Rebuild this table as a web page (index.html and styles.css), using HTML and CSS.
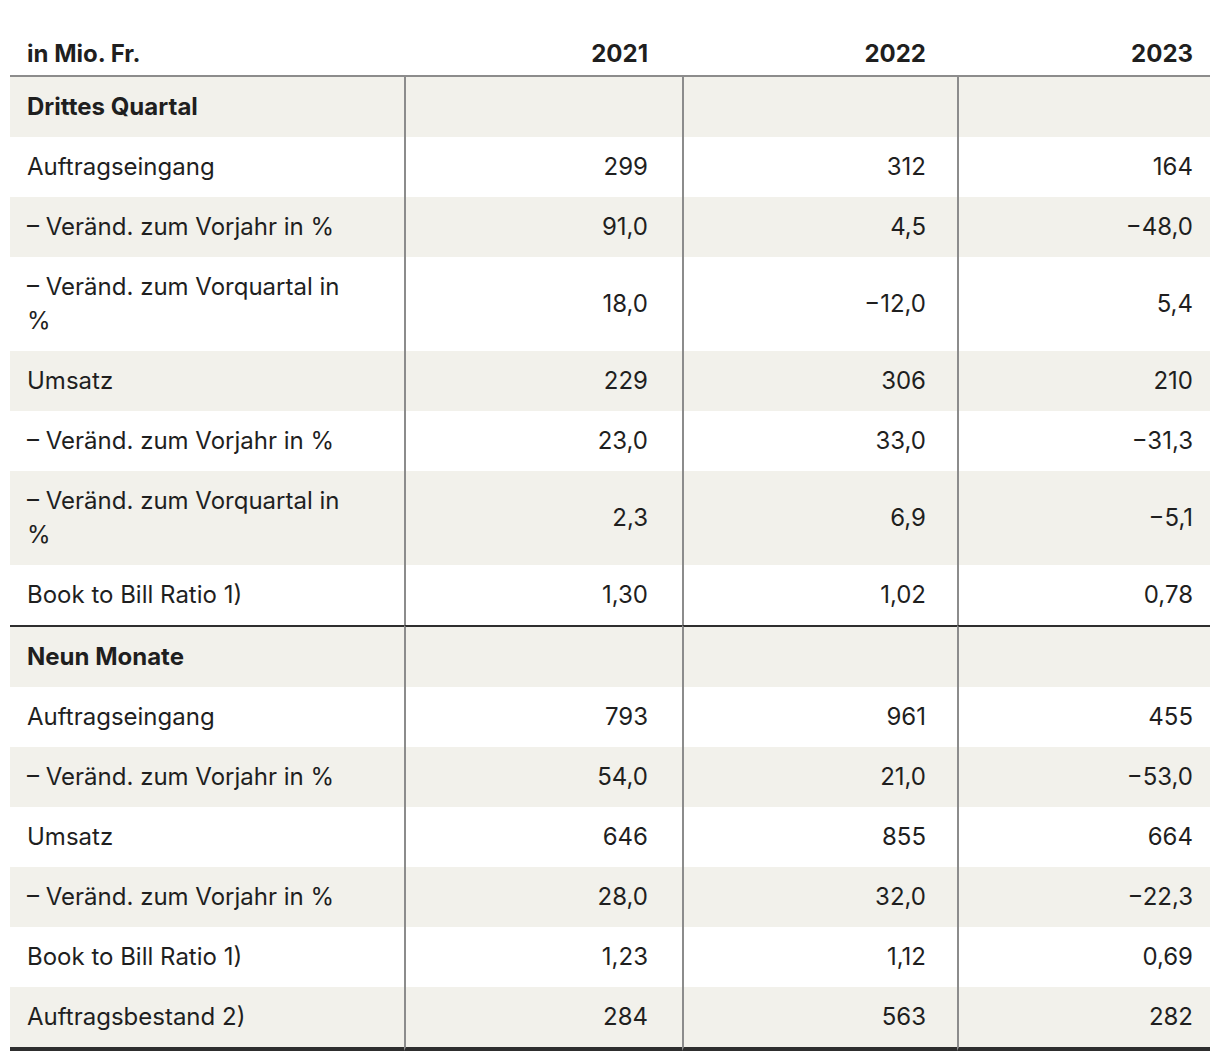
FILE: index.html
```html
<!DOCTYPE html>
<html lang="de">
<head>
<meta charset="utf-8">
<title>Auftragseingang und Umsatz</title>
<link rel="stylesheet" href="styles.css">
</head>
<body>
<table class="fin">
  <colgroup>
    <col class="c-label">
    <col class="c-y1">
    <col class="c-y2">
    <col class="c-y3">
  </colgroup>
  <thead>
    <tr>
      <th class="label">in Mio. Fr.</th>
      <th class="num y1">2021</th>
      <th class="num y2">2022</th>
      <th class="num y3">2023</th>
    </tr>
  </thead>
  <tbody>
    <tr class="alt section"><td class="label">Drittes Quartal</td><td class="num y1"></td><td class="num y2"></td><td class="num y3"></td></tr>
    <tr><td class="label">Auftragseingang</td><td class="num y1">299</td><td class="num y2">312</td><td class="num y3">164</td></tr>
    <tr class="alt"><td class="label">– Veränd. zum Vorjahr in %</td><td class="num y1">91,0</td><td class="num y2">4,5</td><td class="num y3">−48,0</td></tr>
    <tr><td class="label">– Veränd. zum Vorquartal in %</td><td class="num y1">18,0</td><td class="num y2">−12,0</td><td class="num y3">5,4</td></tr>
    <tr class="alt"><td class="label">Umsatz</td><td class="num y1">229</td><td class="num y2">306</td><td class="num y3">210</td></tr>
    <tr><td class="label">– Veränd. zum Vorjahr in %</td><td class="num y1">23,0</td><td class="num y2">33,0</td><td class="num y3">−31,3</td></tr>
    <tr class="alt"><td class="label">– Veränd. zum Vorquartal in %</td><td class="num y1">2,3</td><td class="num y2">6,9</td><td class="num y3">−5,1</td></tr>
    <tr><td class="label">Book to Bill Ratio 1)</td><td class="num y1">1,30</td><td class="num y2">1,02</td><td class="num y3">0,78</td></tr>
    <tr class="alt section break"><td class="label">Neun Monate</td><td class="num y1"></td><td class="num y2"></td><td class="num y3"></td></tr>
    <tr><td class="label">Auftragseingang</td><td class="num y1">793</td><td class="num y2">961</td><td class="num y3">455</td></tr>
    <tr class="alt"><td class="label">– Veränd. zum Vorjahr in %</td><td class="num y1">54,0</td><td class="num y2">21,0</td><td class="num y3">−53,0</td></tr>
    <tr><td class="label">Umsatz</td><td class="num y1">646</td><td class="num y2">855</td><td class="num y3">664</td></tr>
    <tr class="alt"><td class="label">– Veränd. zum Vorjahr in %</td><td class="num y1">28,0</td><td class="num y2">32,0</td><td class="num y3">−22,3</td></tr>
    <tr><td class="label">Book to Bill Ratio 1)</td><td class="num y1">1,23</td><td class="num y2">1,12</td><td class="num y3">0,69</td></tr>
    <tr class="alt last"><td class="label">Auftragsbestand 2)</td><td class="num y1">284</td><td class="num y2">563</td><td class="num y3">282</td></tr>
  </tbody>
</table>
</body>
</html>
```

FILE: styles.css
```css
html, body {
  margin: 0;
  padding: 0;
  background: #ffffff;
}

body {
  padding: 24px 10px 0 10px;
  font-family: Inter, "Noto Sans", "Liberation Sans", sans-serif;
  font-size: 24px;
  line-height: 34px;
  color: #1f1f1f;
}

.fin {
  width: 1200px;
  table-layout: fixed;
  border-collapse: separate;
  border-spacing: 0;
}

.c-label { width: 394px; }
.c-y1 { width: 278px; }
.c-y2 { width: 275px; }
.c-y3 { width: 253px; }

.fin th,
.fin td {
  box-sizing: border-box;
  padding: 13px 16px;
  vertical-align: middle;
  font-weight: 400;
  text-align: left;
}

.fin th {
  font-weight: 700;
  padding-bottom: 4px;
  border-bottom: 2px solid #8c8c8c;
}

.fin td.label {
  padding-left: 17px;
  padding-right: 36px;
}

.fin th.label {
  padding-left: 17px;
}

.fin .num {
  text-align: right;
}

.fin .y1 { padding-right: 34px; }
.fin .y2 { padding-right: 31px; }
.fin .y3 { padding-right: 17px; }

.fin td.y1,
.fin td.y2,
.fin td.y3 {
  border-left: 2px solid #8c8c8c;
}

.fin tr.alt td {
  background: #f2f1eb;
}

.fin tr.section td {
  font-weight: 700;
}

.fin tr.break td {
  border-top: 2px solid #2e2e2e;
}

.fin tr.last td {
  border-bottom: 4px solid #2e2e2e;
}
```
